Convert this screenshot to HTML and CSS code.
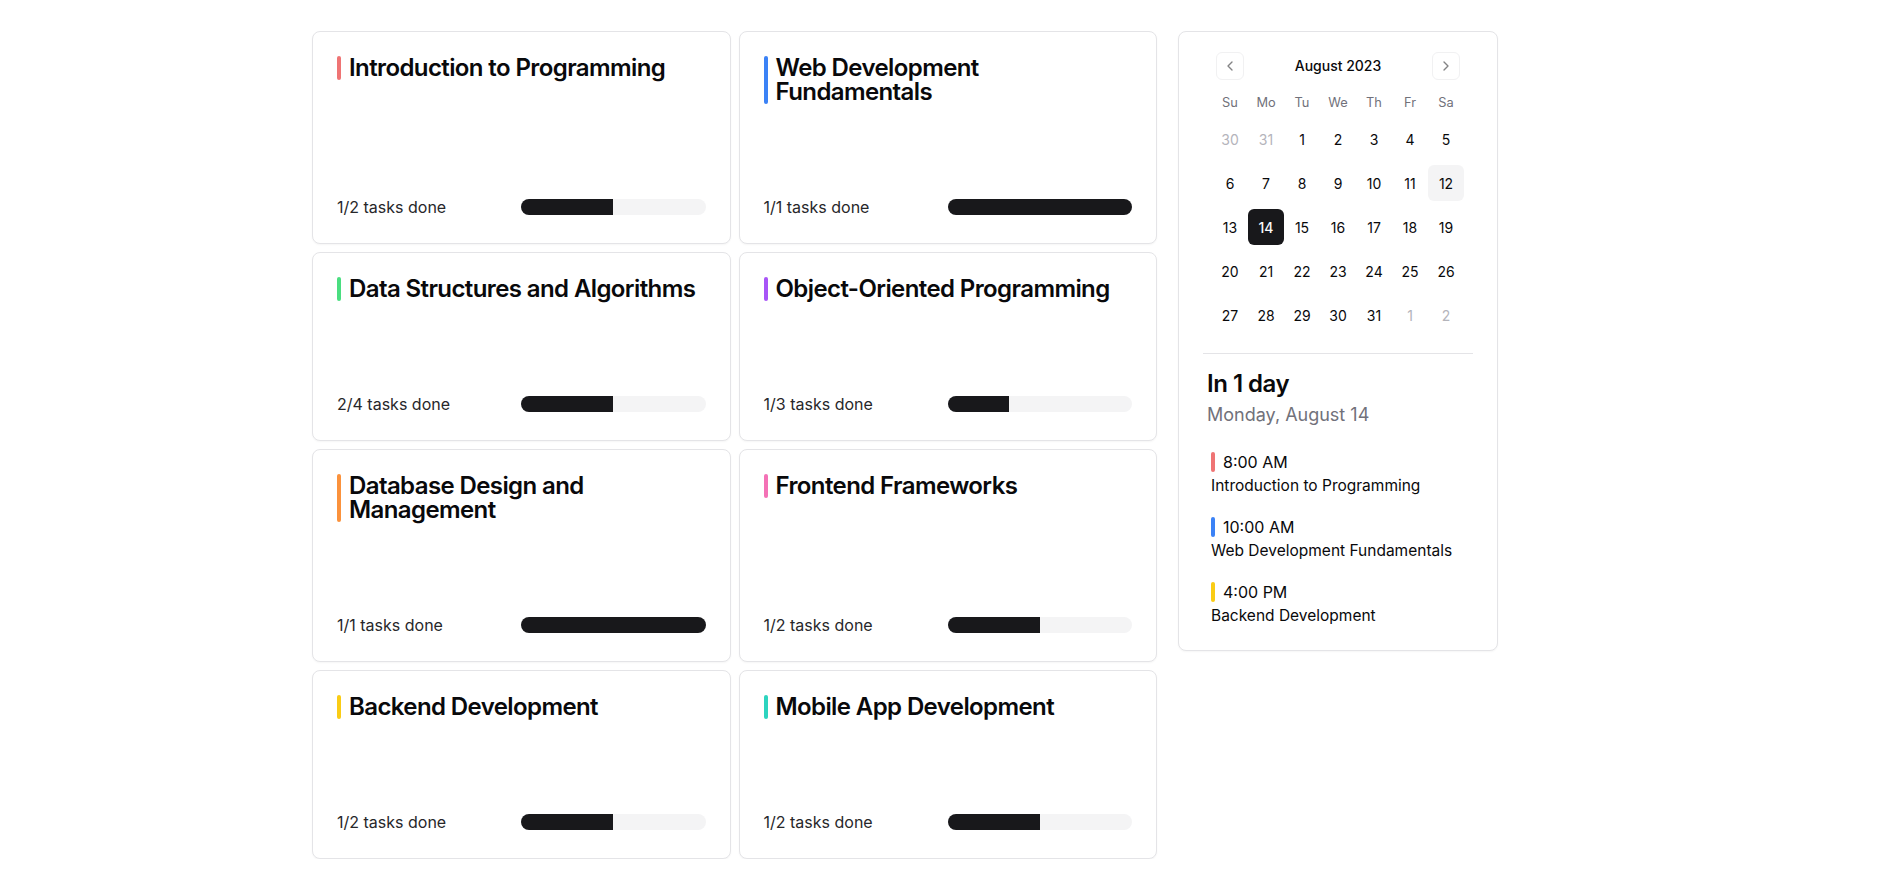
FILE: index.html
```html
<!DOCTYPE html>
<html lang="en">
<head>
<meta charset="utf-8">
<title>Courses</title>
<link rel="stylesheet" href="styles.css">
</head>
<body>
<main class="page">
  <section class="courses">
    <article class="card">
      <div class="card-title"><span class="bar red"></span><h3>Introduction to Programming</h3></div>
      <div class="card-footer"><span class="tasks">1/2 tasks done</span><div class="progress"><div class="fill" style="width:50%"></div></div></div>
    </article>
    <article class="card">
      <div class="card-title"><span class="bar blue"></span><h3>Web Development Fundamentals</h3></div>
      <div class="card-footer"><span class="tasks">1/1 tasks done</span><div class="progress"><div class="fill" style="width:100%"></div></div></div>
    </article>
    <article class="card">
      <div class="card-title"><span class="bar green"></span><h3>Data Structures and Algorithms</h3></div>
      <div class="card-footer"><span class="tasks">2/4 tasks done</span><div class="progress"><div class="fill" style="width:50%"></div></div></div>
    </article>
    <article class="card">
      <div class="card-title"><span class="bar purple"></span><h3>Object-Oriented Programming</h3></div>
      <div class="card-footer"><span class="tasks">1/3 tasks done</span><div class="progress"><div class="fill" style="width:33.33%"></div></div></div>
    </article>
    <article class="card">
      <div class="card-title"><span class="bar orange"></span><h3>Database Design and Management</h3></div>
      <div class="card-footer"><span class="tasks">1/1 tasks done</span><div class="progress"><div class="fill" style="width:100%"></div></div></div>
    </article>
    <article class="card">
      <div class="card-title"><span class="bar pink"></span><h3>Frontend Frameworks</h3></div>
      <div class="card-footer"><span class="tasks">1/2 tasks done</span><div class="progress"><div class="fill" style="width:50%"></div></div></div>
    </article>
    <article class="card">
      <div class="card-title"><span class="bar yellow"></span><h3>Backend Development</h3></div>
      <div class="card-footer"><span class="tasks">1/2 tasks done</span><div class="progress"><div class="fill" style="width:50%"></div></div></div>
    </article>
    <article class="card">
      <div class="card-title"><span class="bar teal"></span><h3>Mobile App Development</h3></div>
      <div class="card-footer"><span class="tasks">1/2 tasks done</span><div class="progress"><div class="fill" style="width:50%"></div></div></div>
    </article>
  </section>

  <aside class="side-card">
    <div class="calendar">
      <div class="caption">
        <button class="nav-btn" aria-label="Previous month"><svg viewBox="0 0 24 24" width="16" height="16"><path d="M15 18l-6-6 6-6"/></svg></button>
        <span class="month">August 2023</span>
        <button class="nav-btn" aria-label="Next month"><svg viewBox="0 0 24 24" width="16" height="16"><path d="M9 18l6-6-6-6"/></svg></button>
      </div>
      <div class="weekdays">
        <span>Su</span><span>Mo</span><span>Tu</span><span>We</span><span>Th</span><span>Fr</span><span>Sa</span>
      </div>
      <div class="days">
        <span class="day outside">30</span><span class="day outside">31</span><span class="day">1</span><span class="day">2</span><span class="day">3</span><span class="day">4</span><span class="day">5</span>
        <span class="day">6</span><span class="day">7</span><span class="day">8</span><span class="day">9</span><span class="day">10</span><span class="day">11</span><span class="day today">12</span>
        <span class="day">13</span><span class="day selected">14</span><span class="day">15</span><span class="day">16</span><span class="day">17</span><span class="day">18</span><span class="day">19</span>
        <span class="day">20</span><span class="day">21</span><span class="day">22</span><span class="day">23</span><span class="day">24</span><span class="day">25</span><span class="day">26</span>
        <span class="day">27</span><span class="day">28</span><span class="day">29</span><span class="day">30</span><span class="day">31</span><span class="day outside">1</span><span class="day outside">2</span>
      </div>
    </div>
    <hr class="sep">
    <div class="agenda">
      <h2 class="agenda-title">In 1 day</h2>
      <p class="agenda-date">Monday, August 14</p>
      <ul class="events">
        <li class="event"><div class="event-time"><span class="ebar red"></span>8:00 AM</div><div class="event-name">Introduction to Programming</div></li>
        <li class="event"><div class="event-time"><span class="ebar blue"></span>10:00 AM</div><div class="event-name">Web Development Fundamentals</div></li>
        <li class="event"><div class="event-time"><span class="ebar yellow"></span>4:00 PM</div><div class="event-name">Backend Development</div></li>
      </ul>
    </div>
  </aside>
</main>
</body>
</html>
```

FILE: styles.css
```css
* { box-sizing: border-box; }

body {
  margin: 0;
  padding-top: 31px;
  background: #ffffff;
  color: #09090b;
  font-family: Inter, "Noto Sans", "Liberation Sans", sans-serif;
}

.page {
  width: 1278px;
  margin: 0 auto;
  display: flex;
  align-items: flex-start;
  gap: 21px;
}

.courses {
  width: 845px;
  display: grid;
  grid-template-columns: 1fr 1fr;
  gap: 8px;
}

.card {
  border: 1px solid #e4e4e7;
  border-radius: 8px;
  background: #fff;
  box-shadow: 0 1px 2px rgba(0,0,0,0.04);
  padding: 24px;
  display: flex;
  flex-direction: column;
}

.card-title {
  display: flex;
  gap: 8px;
  margin-bottom: 91px;
}

.bar {
  flex: 0 0 4px;
  width: 4px;
  border-radius: 2px;
}

.card-title h3 {
  margin: 0;
  font-size: 24px;
  line-height: 24px;
  font-weight: 600;
  letter-spacing: -0.6px;
  color: #09090b;
}

.red { background: #ef7474; }
.blue { background: #3b82f6; }
.green { background: #4ade80; }
.purple { background: #a855f7; }
.orange { background: #fb923c; }
.pink { background: #f472b6; }
.yellow { background: #facc15; }
.teal { background: #2dd4bf; }

.card-footer {
  margin-top: auto;
  display: flex;
  align-items: center;
  justify-content: space-between;
}

.tasks {
  font-size: 16px;
  line-height: 24px;
  color: #27272a;
}

.progress {
  width: 50%;
  height: 16px;
  border-radius: 999px;
  background: #f4f4f5;
  overflow: hidden;
}

.fill {
  height: 100%;
  background: #18181b;
}

.side-card {
  width: 320px;
  border: 1px solid #e4e4e7;
  border-radius: 8px;
  background: #fff;
  box-shadow: 0 1px 2px rgba(0,0,0,0.04);
  padding: 20px 24px 24px;
}

.calendar {
  width: 252px;
  margin: 0 auto;
}

.caption {
  display: flex;
  align-items: center;
  justify-content: space-between;
  padding: 0 4px;
  height: 28px;
}

.nav-btn {
  width: 28px;
  height: 28px;
  padding: 0;
  border: 1px solid #e4e4e7;
  border-radius: 6px;
  background: transparent;
  display: flex;
  align-items: center;
  justify-content: center;
  opacity: 0.5;
}

.nav-btn svg {
  fill: none;
  stroke: #09090b;
  stroke-width: 2;
  stroke-linecap: round;
  stroke-linejoin: round;
}

.month {
  font-size: 14px;
  line-height: 20px;
  font-weight: 500;
}

.weekdays {
  margin-top: 12px;
  display: grid;
  grid-template-columns: repeat(7, 36px);
  height: 21px;
  align-items: center;
}

.weekdays span {
  text-align: center;
  font-size: 12.8px;
  line-height: 20px;
  color: #71717a;
}

.days {
  margin-top: 8px;
  display: grid;
  grid-template-columns: repeat(7, 36px);
  grid-auto-rows: 36px;
  row-gap: 8px;
}

.day {
  display: flex;
  align-items: center;
  justify-content: center;
  font-size: 14px;
  border-radius: 6px;
  color: #09090b;
}

.day.outside { color: #b4b4bb; }
.day.today { background: #f4f4f5; }
.day.selected { background: #18181b; color: #fafafa; font-weight: 500; }

.sep {
  border: 0;
  height: 1px;
  background: #e4e4e7;
  margin: 20px 0 0;
}

.agenda {
  padding: 16px 4px 0;
}

.agenda-title {
  margin: 0;
  font-size: 24px;
  line-height: 28px;
  font-weight: 600;
  letter-spacing: -0.5px;
}

.agenda-date {
  margin: 3px 0 0;
  font-size: 18px;
  line-height: 28px;
  color: #71717a;
}

.events {
  list-style: none;
  margin: 21px 0 0;
  padding: 0 0 0 4px;
  display: flex;
  flex-direction: column;
  gap: 19px;
}

.event-time {
  display: flex;
  align-items: center;
  gap: 8px;
  font-size: 16px;
  line-height: 24px;
}

.ebar {
  width: 4px;
  height: 20px;
  border-radius: 2px;
}

.event-name {
  margin-top: 2px;
  font-size: 15.5px;
  line-height: 20px;
}
```
